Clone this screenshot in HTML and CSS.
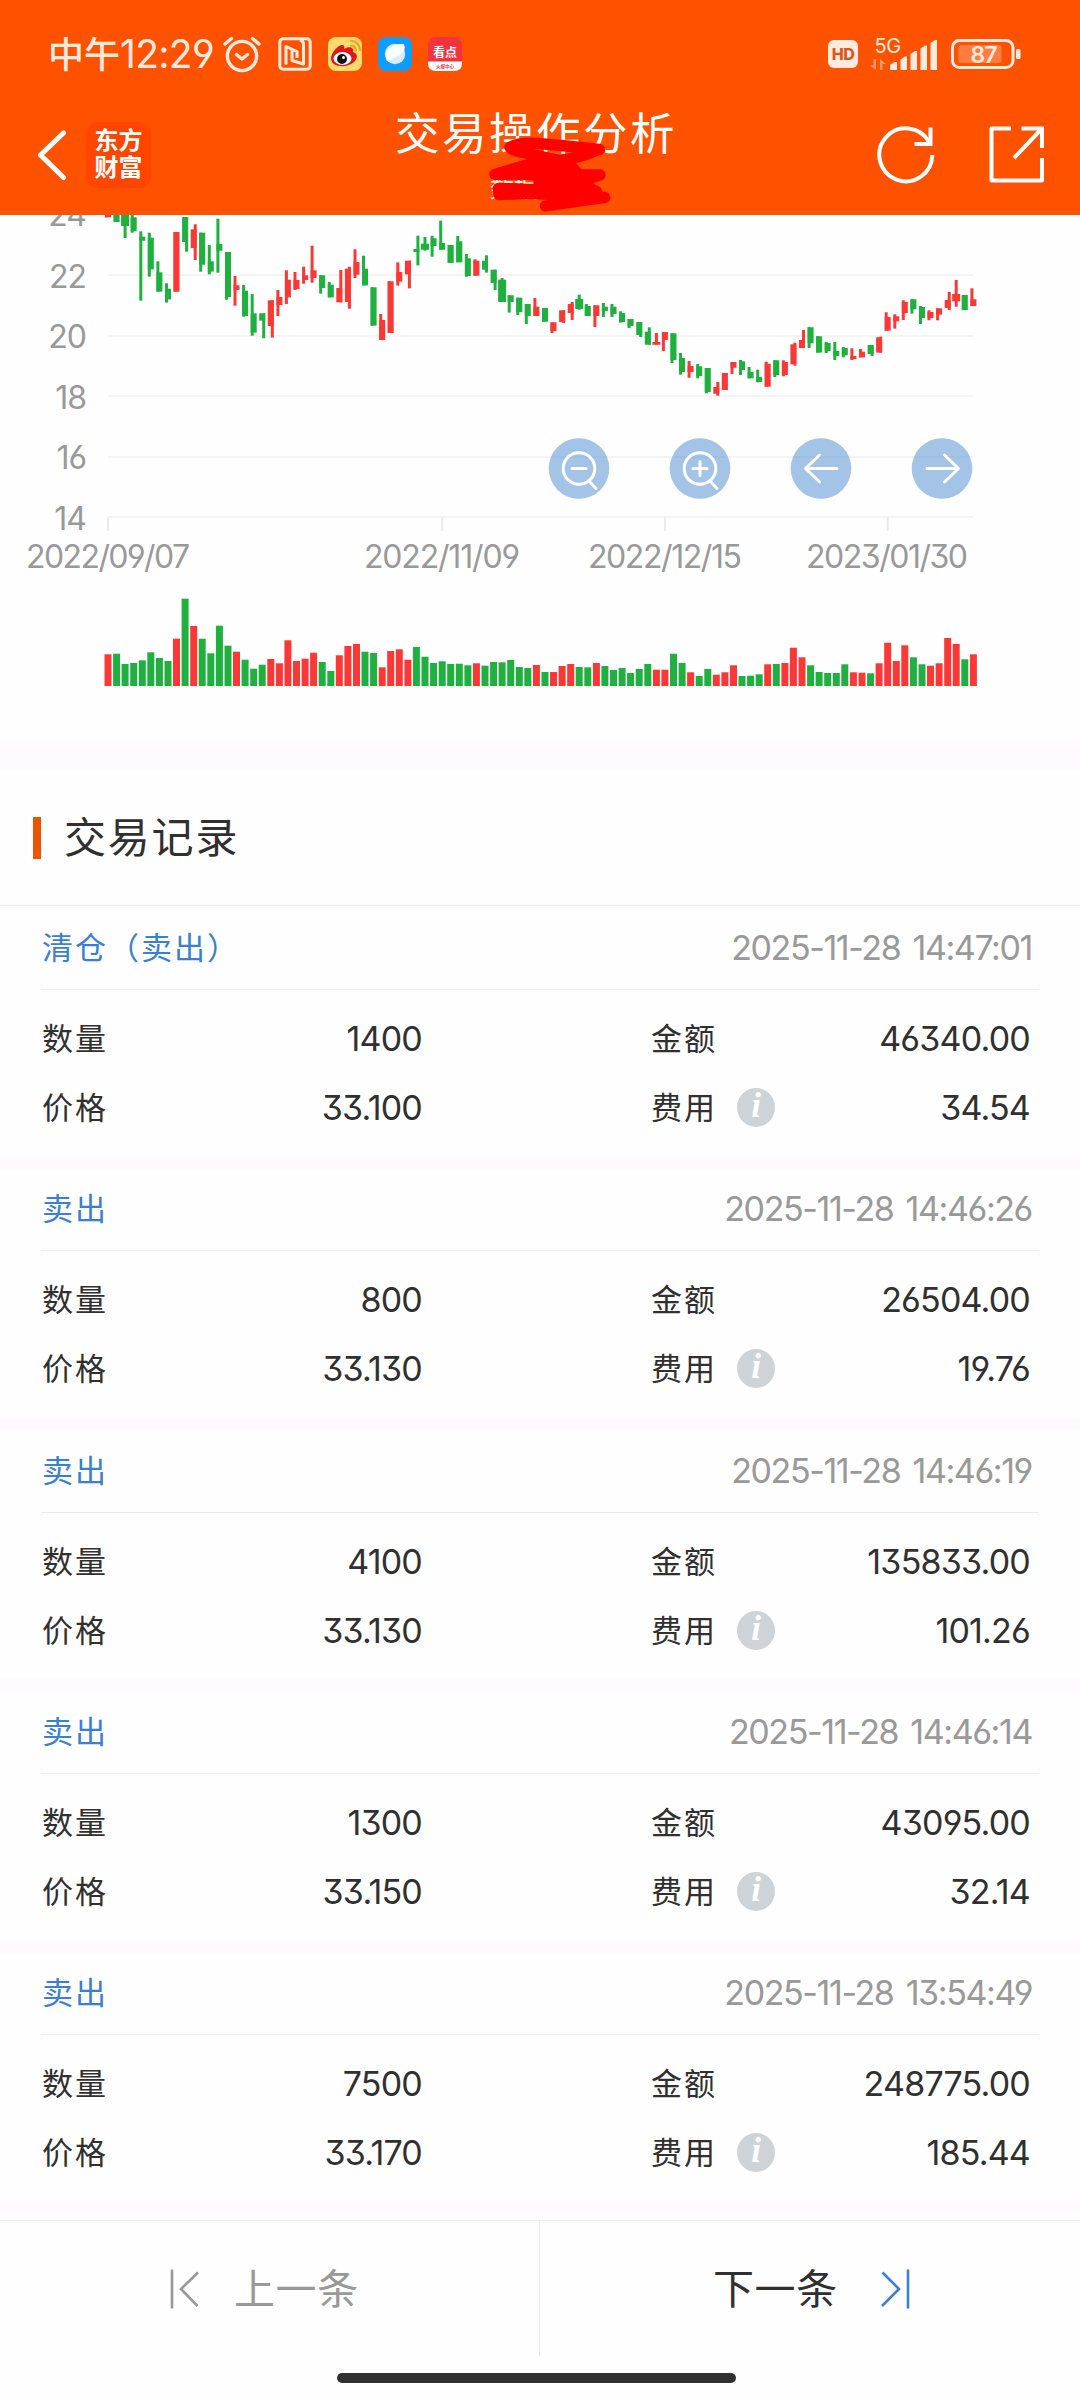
FILE: index.html
```html
<!DOCTYPE html>
<html lang="zh-CN">
<head>
    <meta charset="UTF-8">
    <meta name="viewport" content="width=device-width, initial-scale=1.0">
    <title>交易操作分析</title>
    <link rel="stylesheet" href="styles.css">
</head>
<body>

<!-- Header -->
<header class="header">
    <div class="status-bar">
        <div class="status-left">
            <span class="clock">中午<span class="clock-time">12:29</span></span>
            <svg class="icon-alarm" width="40" height="38" viewBox="0 0 40 38" fill="none" stroke="#ffeadf" stroke-width="3.4" stroke-linecap="round" stroke-linejoin="round">
                <circle cx="20" cy="21" r="14.6"/>
                <path d="M3 9 L9.5 3.5 M37 9 L30.5 3.5 M14.5 19.5 L20 24 L25.5 19.5"/>
            </svg>
            <svg width="34" height="34" viewBox="0 0 34 34" fill="none" stroke="#ffeadf" stroke-width="3" stroke-linejoin="round">
                <rect x="1.8" y="1.8" width="30.4" height="30.4" rx="3.5"/>
                <path d="M8 27.5 V9.5 L19 14.5 V21"/>
                <path d="M14 13 V23.5 L25.500 27 V7 Q25.500 4 22 3"/>
            </svg>
            <svg width="34" height="34" viewBox="0 0 34 34">
                <rect width="34" height="34" rx="8" fill="#ffd96b"/>
                <path d="M3 22 C3 15 11 7 15 8 C17 9 16 12 16 12 C21 9 26 10 25 15 C31 17 29 22 26 25 C20 31 4 31 3 22Z" fill="#e0161b"/>
                <ellipse cx="14.500" cy="21.500" rx="9" ry="6.500" fill="#fff"/>
                <circle cx="14" cy="22" r="5" fill="#111"/>
                <circle cx="15.500" cy="20.500" r="1.500" fill="#fff"/>
                <path d="M23 4 Q31 4 32 13 M23 8.500 Q27.500 9 28 13.500" fill="none" stroke="#f5a31f" stroke-width="2.200" stroke-linecap="round"/>
            </svg>
            <svg width="34" height="34" viewBox="0 0 34 34">
                <rect width="34" height="34" rx="8" fill="#0c9dff"/>
                <circle cx="17" cy="17" r="10.200" fill="#d6ecfd"/>
                <path d="M9 24 C5 16 11 6 26 7 C29 15 22 19 9 24Z" fill="#fff"/>
            </svg>
            <svg width="34" height="34" viewBox="0 0 34 34">
                <rect width="34" height="34" rx="8" fill="#f4323f"/>
                <path d="M0 24.500 H34 V26 Q34 34 26 34 H8 Q0 34 0 26Z" fill="#fff"/>
                <text x="17" y="19.500" class="kandian" text-anchor="middle">看点</text>
                <text x="17" y="31" class="kandian-sub" text-anchor="middle">火爆中心</text>
            </svg>
        </div>
        <div class="status-right">
            <span class="hd">HD</span>
            <svg class="signal" width="68" height="34" viewBox="0 0 68 34" fill="#ffeadf">
                <text x="4.500" y="15.500" class="net">5G</text>
                <path d="M3.500 22 h2.500 v11 L0 28.500 h3.500z M10 22 L16 27 h-3.500 v6 h-2.500z" opacity="0.45"/>
                <path d="M20 28 L24.500 25 H27 V33 H20z"/>
                <path d="M30.500 22.500 L35 19.500 H37 V33 H30.500z"/>
                <path d="M40.500 17 L45 14 H47 V33 H40.500z"/>
                <path d="M50.500 11.500 L55 8.500 H57 V33 H50.500z"/>
                <path d="M60.500 6 L65 3 H67 V33 H60.500z"/>
            </svg>
            <svg width="70" height="30" viewBox="0 0 70 30">
                <rect x="1.500" y="1.500" width="60.500" height="27" rx="7" fill="none" stroke="#ffeadf" stroke-width="3"/>
                <rect x="7.500" y="6" width="43" height="18" rx="2.500" fill="#fff" opacity="0.25"/>
                <rect x="65" y="10" width="4.500" height="10" rx="1.500" fill="#ffeadf"/>
                <text x="32.500" y="23.500" class="battery" text-anchor="middle">87</text>
            </svg>
        </div>
    </div>

    <div class="nav">
        <div class="nav-left">
            <svg width="30" height="54" viewBox="0 0 30 54" fill="none" stroke="#fff" stroke-width="5" stroke-linecap="round" stroke-linejoin="round">
                <path d="M25.500 5 L2.500 27 L25.500 49.500"/>
            </svg>
            <div class="logo">东方<br>财富</div>
        </div>
        <div class="nav-title">
            <h1>交易操作分析</h1>
            <p>数据</p>
            <!-- hand-drawn mark over the account name -->
            <svg class="scribble" width="160" height="95" viewBox="0 0 480 285" fill="none" stroke="#ff0000" stroke-width="34" stroke-linecap="round" stroke-linejoin="round">
                <path d="M388 88 L290 78 L200 70 Q140 68 120 82 Q125 92 165 98 L270 122 Q340 112 386 88"/>
                <path d="M215 122 L75 163 L390 165 L310 190 L380 215 L85 205 L87 224 L180 220 L404 232 L226 258"/>
                <path d="M200 130 L310 135 L380 215 L200 215 Z" fill="#ff0000" stroke-width="20"/>
            </svg>
        </div>
        <div class="nav-right">
            <svg width="60" height="60" viewBox="0 0 60 60" fill="none" stroke="#fff" stroke-width="4">
                <path d="M56.300 31 A26.500 26.500 0 1 1 53 18"/>
                <path d="M54.500 3.500 V20 H38.500"/>
            </svg>
            <svg width="58" height="60" viewBox="0 0 58 60" fill="none" stroke="#fff" stroke-width="4" stroke-linejoin="round">
                <path d="M23 4.500 H3.500 V56.500 H54 V34"/>
                <path d="M33.500 4.500 H54 V24 M54 4.500 L26 34" stroke-linejoin="miter"/>
            </svg>
        </div>
    </div>
</header>

<!-- K line and volume -->
<section class="chart">
    <svg width="1080" height="525" viewBox="0 15 1080 525">
        <g id="grid"></g>
        <g id="candles"></g>
        <g id="volume"></g>
        <g class="axis-y" text-anchor="end">
            <text x="86" y="26">24</text>
            <text x="86" y="87.500">22</text>
            <text x="86" y="148">20</text>
            <text x="86" y="208.500">18</text>
            <text x="86" y="269">16</text>
            <text x="86" y="330">14</text>
        </g>
        <g class="axis-x">
            <text x="26" y="367.500" textLength="164">2022/09/07</text>
            <text x="364" y="367.500" textLength="156">2022/11/09</text>
            <text x="588" y="367.500" textLength="154">2022/12/15</text>
            <text x="806" y="367.500" textLength="162">2023/01/30</text>
        </g>
        <g class="tool" fill="none" stroke="#fff" stroke-width="3" stroke-linecap="round" stroke-linejoin="round">
            <g transform="translate(579 268.500)">
                <circle class="tool-bg" r="30.300"/>
                <circle r="15.800"/>
                <path d="M-7 0 H7 M10.500 13 L17 20"/>
            </g>
            <g transform="translate(700 268.500)">
                <circle class="tool-bg" r="30.300"/>
                <circle r="15.800"/>
                <path d="M-7 0 H7 M0 -7 V7 M10.500 13 L17 20"/>
            </g>
            <g transform="translate(821 268.500)">
                <circle class="tool-bg" r="30.300"/>
                <path d="M16 0 H-15 M-1.500 -13.500 L-15.500 0 L-1.500 13.500"/>
            </g>
            <g transform="translate(942 268.500)">
                <circle class="tool-bg" r="30.300"/>
                <path d="M-15 0 H16 M2.500 -13.500 L16.500 0 L2.500 13.500"/>
            </g>
        </g>
    </svg>
</section>

<!-- Trade records -->
<section class="records">
    <h2 class="section-title"><span>交易记录</span></h2>

    <div class="record">
        <div class="record-head"><span class="type">清仓（卖出）</span><span class="time">2025-11-28 14:47:01</span></div>
        <div class="record-body">
            <span>数量</span><span class="num">1400</span><span class="label">金额</span><span class="num">46340.00</span>
            <span>价格</span><span class="num">33.100</span><span class="label">费用<i class="info">i</i></span><span class="num">34.54</span>
        </div>
    </div>

    <div class="record">
        <div class="record-head"><span class="type">卖出</span><span class="time">2025-11-28 14:46:26</span></div>
        <div class="record-body">
            <span>数量</span><span class="num">800</span><span class="label">金额</span><span class="num">26504.00</span>
            <span>价格</span><span class="num">33.130</span><span class="label">费用<i class="info">i</i></span><span class="num">19.76</span>
        </div>
    </div>

    <div class="record">
        <div class="record-head"><span class="type">卖出</span><span class="time">2025-11-28 14:46:19</span></div>
        <div class="record-body">
            <span>数量</span><span class="num">4100</span><span class="label">金额</span><span class="num">135833.00</span>
            <span>价格</span><span class="num">33.130</span><span class="label">费用<i class="info">i</i></span><span class="num">101.26</span>
        </div>
    </div>

    <div class="record">
        <div class="record-head"><span class="type">卖出</span><span class="time">2025-11-28 14:46:14</span></div>
        <div class="record-body">
            <span>数量</span><span class="num">1300</span><span class="label">金额</span><span class="num">43095.00</span>
            <span>价格</span><span class="num">33.150</span><span class="label">费用<i class="info">i</i></span><span class="num">32.14</span>
        </div>
    </div>

    <div class="record">
        <div class="record-head"><span class="type">卖出</span><span class="time">2025-11-28 13:54:49</span></div>
        <div class="record-body">
            <span>数量</span><span class="num">7500</span><span class="label">金额</span><span class="num">248775.00</span>
            <span>价格</span><span class="num">33.170</span><span class="label">费用<i class="info">i</i></span><span class="num">185.44</span>
        </div>
    </div>
</section>

<!-- Bottom pager -->
<footer class="pager">
    <div class="pager-item prev">
        <svg width="30" height="40" viewBox="0 0 30 40" fill="none" stroke="#999" stroke-width="2.600">
            <path d="M2 0.500 V39.500 M28 3.500 L11 20 L27.500 37"/>
        </svg>
        <span>上一条</span>
    </div>
    <div class="pager-item next">
        <span>下一条</span>
        <svg width="30" height="40" viewBox="0 0 30 40" fill="none" stroke="#3a80d2" stroke-width="2.600">
            <path d="M28 0.500 V39.500 M2.500 3.500 L19 20 L2 37"/>
        </svg>
    </div>
</footer>
<div class="home-bar"></div>

<script src="chart.js"></script>
</body>
</html>
```

FILE: styles.css
```css
* {
    margin: 0;
    padding: 0;
    box-sizing: border-box;
}

body {
    width: 1080px;
    height: 2400px;
    overflow: hidden;
    background: #fefefe;
    font-family: Inter, "Noto Sans CJK SC", sans-serif;
    font-feature-settings: "cv03", "cv04", "cv09";
    color: #303030;
}

svg {
    display: block;
    flex: none;
}

/* Header */
.header {
    height: 215px;
    padding-top: 30px;
    background: #ff5200;
    color: #fff;
}

.status-bar {
    display: flex;
    justify-content: space-between;
    align-items: center;
    height: 48px;
    padding: 0 59px 0 48px;
    color: #ffeadf;
}

.status-left {
    display: flex;
    align-items: center;
    gap: 16px;
}

.clock {
    width: 158px;
    font-size: 36px;
    line-height: 48px;
    font-weight: 500;
    white-space: nowrap;
}

.clock-time {
    font-size: 39px;
    font-weight: 400;
    letter-spacing: -0.7px;
}

.kandian {
    font-size: 12px;
    font-weight: 700;
    fill: #fff;
}

.kandian-sub {
    font-size: 4.5px;
    font-weight: 700;
    fill: #e0303a;
}

.status-right {
    display: flex;
    align-items: center;
}

.hd {
    width: 30px;
    height: 28px;
    margin-right: 12px;
    border-radius: 6px;
    background: #ffeadf;
    color: #d9581c;
    font-size: 16px;
    line-height: 28px;
    font-weight: 800;
    text-align: center;
    letter-spacing: -0.5px;
}

.signal {
    margin-right: 13px;
    overflow: visible;
}

.net {
    font-size: 20px;
    letter-spacing: -0.5px;
}

.battery {
    font-size: 23px;
    font-weight: 600;
    letter-spacing: -1px;
    fill: #ffeadf;
}

.nav {
    display: flex;
    align-items: center;
    height: 137px;
    padding: 0 34px 0 38px;
}

.nav-left {
    display: flex;
    align-items: center;
    gap: 18px;
    width: 357px;
    padding-top: 16px;
}

.logo {
    width: 65px;
    height: 66px;
    padding-top: 5px;
    border-radius: 12px;
    background: #ff4600;
    font-size: 24px;
    font-weight: 700;
    line-height: 27px;
    text-align: center;
}

.nav-title {
    position: relative;
    align-self: flex-start;
    padding-top: 24px;
}

.nav-title h1 {
    font-size: 44.5px;
    font-weight: 400;
    line-height: 64px;
    letter-spacing: 2.5px;
    white-space: nowrap;
}

.nav-title p {
    padding-left: 95px;
    font-size: 24px;
    line-height: 46px;
}

.scribble {
    position: absolute;
    left: 75px;
    top: 42px;
}

.nav-right {
    display: flex;
    gap: 52px;
    margin-left: auto;
    padding-top: 14px;
}

/* Chart */
.chart {
    height: 525px;
}

.axis-y,
.axis-x {
    font-size: 32px;
    fill: #999;
}

.axis-y {
    letter-spacing: -1px;
}

.tool-bg {
    fill: #4887d0;
    fill-opacity: 0.5;
    stroke: none;
}

.up {
    fill: #fa3836;
}

.down {
    fill: #1fb040;
}

/* Records */
.records {
    border-top: 29px solid #fefaff;
}

.section-title {
    display: flex;
    align-items: center;
    gap: 23px;
    height: 137px;
    margin-bottom: 2px;
    padding-left: 33px;
    border-bottom: 1px solid #ececec;
    font-size: 42px;
    font-weight: 400;
    letter-spacing: 1.8px;
}

.section-title span {
    padding-bottom: 5px;
}

.section-title::before {
    content: "";
    width: 8px;
    height: 42px;
    margin-top: 1px;
    background: #ea5600;
}

.record {
    height: 261.25px;
    padding: 0 41px;
    border-bottom: 14px solid #fefaff;
}

.record-head {
    display: flex;
    justify-content: space-between;
    height: 82px;
    padding-right: 7px;
    border-bottom: 1px solid #ececec;
    line-height: 79px;
}

.type {
    padding-left: 1px;
    color: #3a80d2;
    font-size: 31px;
    letter-spacing: 2px;
}

.time {
    color: #999;
    font-size: 34px;
    letter-spacing: -1.4px;
    word-spacing: 4px;
}

.record-body {
    display: grid;
    grid-template-columns: 120px 260px 260px 348px;
    grid-auto-rows: 69px;
    padding: 14px 0 0 1px;
    font-size: 31px;
    line-height: 69px;
    letter-spacing: 2px;
}

.num {
    font-size: 34px;
    letter-spacing: -0.8px;
    text-align: right;
}

.label {
    display: flex;
    align-items: center;
    padding-left: 229px;
    white-space: nowrap;
}

.info {
    flex: none;
    width: 38px;
    height: 39px;
    margin-left: 20px;
    border-radius: 50%;
    background: #ced3d8;
    color: #fff;
    font: italic bold 35px/36px "Liberation Serif", serif;
    letter-spacing: 0;
    text-align: center;
}

/* Pager */
.pager {
    display: flex;
    height: 136px;
    margin-top: 6px;
    border-top: 1px solid #ececec;
    font-size: 41px;
    line-height: 132px;
    letter-spacing: 0.6px;
}

.pager-item {
    display: flex;
    align-items: center;
    width: 540px;
}

.prev {
    gap: 34px;
    padding-left: 170px;
    border-right: 1px solid #ececec;
    color: #999;
}

.next {
    gap: 42px;
    padding-left: 173px;
}

.home-bar {
    width: 399px;
    height: 10px;
    margin: 17px auto 0 337px;
    border-radius: 5px;
    background: #303030;
}
```

FILE: chart.js
```javascript
const START = 108;
const STEP = 8.568;

// [direction, body top, body bottom, wick top, wick bottom, wick side]
// side: l / r / c, heights are thirds of a pixel
const candles = [
    ["r",45,52,45,52,"l"],["g",45,66,45,66,"l"],["g",45,78,45,114,"c"],["g",52,94,45,98,"l"],
    ["g",110,122,94,302,"l"],["g",113,208,98,230,"l"],["g",217,275,184,275,"l"],["g",266,298,250,308,"l"],
    ["r",96,275,96,275,"l"],["g",51,126,51,155,"r"],["r",88,144,73,180,"r"],["g",98,194,98,215,"l"],
    ["g",184,215,135,223,"l"],["g",132,152,56,218,"l"],["g",156,291,156,299,"l"],["r",256,270,228,317,"l"],
    ["g",272,348,255,350,"l"],["g",340,398,282,407,"l"],["g",340,362,340,415,"r"],["r",301,378,301,413,"r"],
    ["r",291,315,270,348,"l"],["r",239,292,211,312,"l"],["r",240,267,216,270,"l"],["r",226,240,200,251,"l"],
    ["r",211,234,137,248,"l"],["g",226,264,226,281,"l"],["g",254,292,246,292,"l"],["r",264,307,210,307,"r"],
    ["r",206,306,200,326,"r"],["r",186,224,148,234,"l"],["g",206,256,167,256,"l"],["g",262,377,262,377,"l"],
    ["r",360,420,342,420,"l"],["r",244,399,244,399,"l"],["r",216,245,187,257,"l"],["r",182,223,182,265,"r"],
    ["g",147,156,107,196,"r"],["g",131,149,111,152,"c"],["g",115,138,107,170,"l"],["g",129,149,62,149,"l"],
    ["g",135,189,135,189,"l"],["g",124,187,108,187,"l"],["g",175,228,162,230,"l"],["r",182,227,178,227,"l"],
    ["g",182,209,166,218,"r"],["g",209,249,209,270,"r"],["g",239,306,234,306,"c"],["g",286,306,286,338,"l"],
    ["g",293,336,293,345,"l"],["g",312,348,312,372,"l"],["r",320,348,294,348,"l"],["g",324,365,324,365,"l"],
    ["r",367,393,367,399,"l"],["r",331,366,331,369,"r"],["r",312,339,306,360,"r"],["g",297,327,284,329,"c"],
    ["g",318,348,312,348,"l"],["r",316,348,316,381,"l"],["g",320,333,309,351,"l"],["g",320,342,312,351,"l"],
    ["g",339,366,334,368,"l"],["g",357,378,357,384,"l"],["g",366,405,366,411,"r"],["g",395,434,382,434,"r"],
    ["r",426,434,399,434,"c"],["r",396,420,396,453,"l"],["g",400,480,400,489,"l"],["g",474,516,459,524,"l"],
    ["r",498,516,483,533,"l"],["g",499,528,492,535,"l"],["g",504,576,504,580,"l"],["r",561,581,546,587,"r"],
    ["r",519,570,519,570,"l"],["r",486,503,486,522,"l"],["g",484,510,480,525,"l"],["g",516,535,501,535,"l"],
    ["g",531,546,509,547,"l"],["r",491,560,485,560,"l"],["g",481,525,481,531,"l"],["r",486,525,481,529,"l"],
    ["r",433,493,428,497,"r"],["r",420,444,390,444,"r"],["g",382,430,382,444,"l"],["g",409,458,409,458,"l"],
    ["g",429,453,426,459,"l"],["g",453,468,426,480,"l"],["g",444,466,441,472,"l"],["r",468,477,445,480,"l"],
    ["r",455,472,447,472,"l"],["g",435,462,435,468,"r"],["r",412,458,410,458,"r"],["r",351,392,337,392,"l"],
    ["r",349,364,343,386,"l"],["r",306,339,301,360,"l"],["g",298,328,298,341,"l"],["g",321,354,318,372,"l"],
    ["r",336,354,331,361,"l"],["r",325,344,325,361,"l"],["r",300,324,276,330,"r"],["r",282,304,240,320,"c"],
    ["g",285,330,285,330,"l"],["r",298,318,265,318,"l"]
];

const volumes = [
    95,-97,-66,-69,-77,-101,-84,-75,142,-262,180,-142,-98,-181,-121,103,-79,-52,-64,81,
    68,137,75,82,100,-72,-45,92,120,126,-103,-99,56,105,110,79,-117,-88,-69,-74,
    -66,-67,-62,68,-61,-72,-71,-78,-57,-54,63,-42,42,60,66,-57,-56,69,-60,-48,
    -54,-39,-51,-66,49,49,-97,-69,41,-30,-51,34,41,62,-30,-31,-35,65,-66,69,
    115,86,-62,-42,-39,-39,-65,41,40,-38,68,130,75,122,-86,-65,61,68,144,126,
    -80,95
];

function rect(x, y, w, h, cls) {
    return `<rect x="${x.toFixed(1)}" y="${y.toFixed(1)}" width="${w}" height="${h.toFixed(1)}" class="${cls}"/>`;
}

function drawGrid() {
    let out = "";
    for (const y of [75, 136, 196, 257, 317]) {
        out += `<path d="M108 ${y} H973" stroke="#f4f4f4" stroke-width="2"/>`;
    }
    for (const i of [0, 39, 65, 91]) {
        out += `<path d="M${START + i * STEP} 317 V331" stroke="#eeeaec" stroke-width="2"/>`;
    }
    document.getElementById("grid").innerHTML = out;
}

function drawCandles() {
    let out = "";
    candles.forEach(([dir, top, bottom, high, low, side], i) => {
        const x = START + i * STEP;
        const cls = dir === "r" ? "up" : "down";
        const wick = { l: x - 3, r: x, c: x - 1.5 }[side];
        const width = side === "c" ? 8 : 6;
        out += rect(x - width / 2, top / 3, width, (bottom - top) / 3, cls);
        out += rect(wick, high / 3, 3, (low - high) / 3, cls);
    });
    document.getElementById("candles").innerHTML = out;
}

// negative value = falling day
function drawVolume() {
    let out = "";
    volumes.forEach((v, i) => {
        const h = Math.abs(v) / 3;
        out += rect(START + i * STEP - 3.5, 486 - h, 7, h, v > 0 ? "up" : "down");
    });
    document.getElementById("volume").innerHTML = out;
}

drawGrid();
drawCandles();
drawVolume();
```
